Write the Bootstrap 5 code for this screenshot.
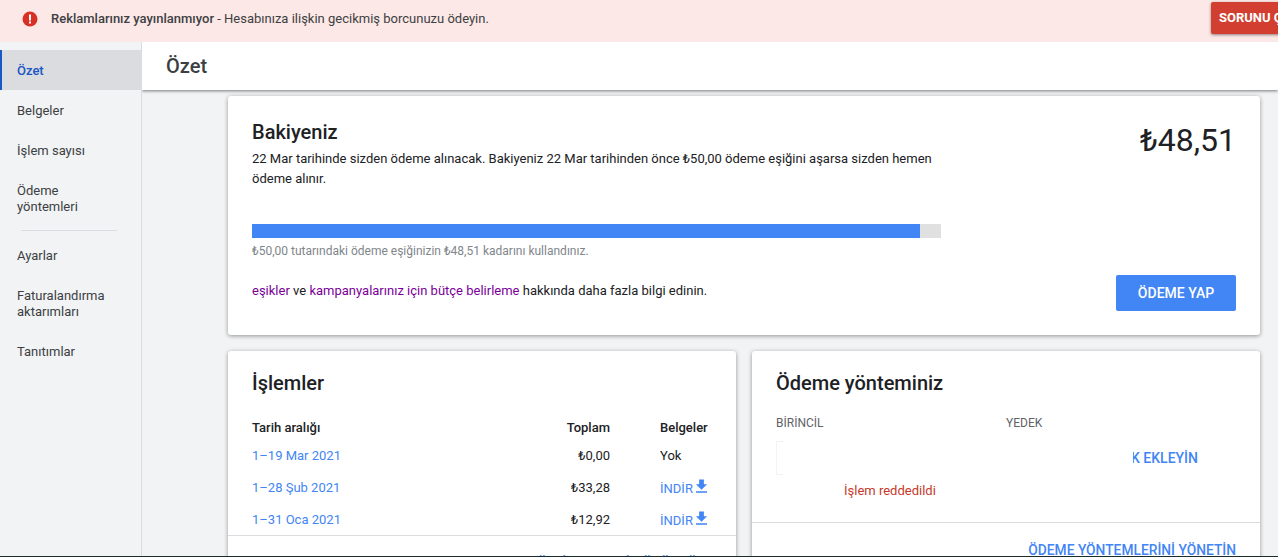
<!DOCTYPE html>
<html lang="tr">
<head>
  <meta charset="UTF-8">
  <meta name="viewport" content="width=device-width, initial-scale=1.0">
  <title>Özet</title>
  <link href="https://cdn.jsdelivr.net/npm/bootstrap@5.3.0/dist/css/bootstrap.min.css" rel="stylesheet">
  <style>
    html, body {
      height: 100%;
      overflow: hidden;
    }
    body {
      font-family: Roboto, "Liberation Sans", sans-serif;
      font-size: 13px;
      line-height: 20px;
      color: #202124;
      background: #f1f3f4;
    }
    a { text-decoration: none; }
    .app-shell {
      height: 557px;
      border-bottom: 1px solid #1c2b2b;
      overflow: hidden;
    }
    .alert-strip {
      height: 42px;
      flex: none;
      background: #fce8e6;
      color: #3c4043;
      padding: 0 0 5px 22px;
      overflow: hidden;
    }
    .alert-strip strong { font-weight: 500; }
    .alert-dot {
      width: 16px;
      height: 16px;
      margin-right: 13px;
      flex: none;
    }
    .fix-btn {
      flex: none;
      align-self: flex-start;
      width: 110px;
      height: 32px;
      margin: 2px -43px 0 auto;
      padding: 0 0 0 8px;
      background: #d23f31;
      color: #fff;
      font-size: 13px;
      font-weight: 700;
      border: 0;
      border-radius: 2px 0 0 2px;
      box-shadow: 0 1px 3px rgba(0,0,0,.45);
      white-space: nowrap;
      text-align: left;
      overflow: hidden;
    }
    .side-nav {
      width: 142px;
      flex: none;
      padding-top: 8px;
      background: #f1f3f4;
      border-right: 1px solid #dadce0;
    }
    .side-link {
      display: block;
      padding: 13px 28px 11px 17px;
      line-height: 16px;
      color: #3c4043;
    }
    .side-link.on {
      background: #dadce0;
      color: #1a56c4;
      font-weight: 500;
      padding-left: 15px;
      border-left: 2px solid #1a56c4;
    }
    .side-rule {
      height: 1px;
      margin: 4px 24px 4px 21px;
      background: #dadce0;
    }
    .page-head {
      height: 48px;
      flex: none;
      padding-left: 24px;
      background: #fff;
      font-size: 20px;
      font-weight: 500;
      color: #3c4043;
      box-shadow: 0 1px 3px rgba(0,0,0,.5);
      position: relative;
    }
    .page-body {
      padding: 6px 18px 0 86px;
      overflow: hidden;
    }
    .panel {
      border: 0;
      border-radius: 3px;
      box-shadow: 0 1px 4px rgba(0,0,0,.4);
    }
    .balance-panel {
      height: 239px;
      padding: 24px;
    }
    .panel-title {
      font-size: 20px;
      line-height: 24px;
      font-weight: 500;
      color: #202124;
    }
    .balance-copy {
      width: 689px;
      margin-top: 5px;
    }
    .amount {
      font-size: 32px;
      line-height: 40px;
      color: #202124;
    }
    .meter {
      width: 689px;
      height: 14px;
      margin-top: 35px;
      background: #e0e0e0;
    }
    .meter-fill {
      height: 100%;
      background: #4285f4;
    }
    .meter-note {
      width: 689px;
      margin-top: 3px;
      font-size: 12px;
      color: #80868b;
    }
    .visited { color: #7a0099; }
    .pay-btn {
      width: 120px;
      height: 36px;
      padding: 0;
      background: #4285f4;
      color: #fff;
      border: 0;
      border-radius: 2px;
      font-size: 14px;
      font-weight: 500;
    }
    .balance-foot { margin-top: 14px; }
    .learn-more { padding-top: 6px; }
    .deal-panel { height: 300px; }
    .deal-table {
      width: 456px;
      margin: 21px 0 0 0;
      table-layout: fixed;
    }
    .deal-table th, .deal-table td {
      padding: 0;
      height: 32px;
      vertical-align: middle;
      background: transparent;
      color: #202124;
      font-size: 13px;
    }
    .deal-table th { font-weight: 500; height: 24px; }
    .deal-table .date-cell { width: 278px; }
    .deal-table .sum-cell { width: 80px; text-align: right; }
    .deal-table .doc-cell { width: 98px; padding-left: 50px; white-space: nowrap; }
    .blue-link { color: #4285f4; }
    .down-icon {
      width: 19px;
      height: 19px;
      margin-left: -4px;
      vertical-align: -2.5px;
      fill: #4285f4;
    }
    .panel-top {
      padding: 20px 24px 0 24px;
    }
    .panel-foot {
      padding: 17px 24px;
      border-top: 1px solid #dadce0;
      font-weight: 500;
      font-size: 13.8px;
      text-align: right;
    }
    .deal-foot { margin-top: -1px; }
    .method-foot { margin-top: 21px; }
    .pay-labels { margin-top: 18px; }
    .pay-label {
      width: 230px;
      color: #5f6368;
      font-size: 12px;
    }
    .pay-row {
      height: 36px;
      margin-top: 7px;
    }
    .pay-slot {
      width: 7px;
      height: 34px;
      margin-right: 223px;
      flex: none;
      border-left: 1px solid #f3f3f3;
      border-top: 1px solid #f3f3f3;
      border-bottom: 1px solid #f3f3f3;
    }
    .add-clip {
      width: 65px;
      margin-left: 127px;
      overflow: hidden;
      white-space: nowrap;
      font-weight: 500;
      font-size: 14px;
    }
    .declined {
      margin: 5px 0 0 68px;
      color: #c5392a;
    }
  </style>
</head>
<body>
  <div class="app-shell d-flex flex-column">
    <div class="alert-strip d-flex align-items-center">
      <svg class="alert-dot" viewBox="0 0 16 16"><circle cx="8" cy="8" r="7.5" fill="#d93025"/><rect x="7" y="3.5" width="2" height="6" fill="#fff"/><rect x="7" y="10.5" width="2" height="2" fill="#fff"/></svg>
      <span><strong>Reklamlarınız yayınlanmıyor</strong> - Hesabınıza ilişkin gecikmiş borcunuzu ödeyin.</span>
      <button class="fix-btn" type="button">SORUNU ÇÖZ</button>
    </div>

    <div class="d-flex flex-grow-1 overflow-hidden">
      <nav class="side-nav">
        <a class="side-link on" href="#">Özet</a>
        <a class="side-link" href="#">Belgeler</a>
        <a class="side-link" href="#">İşlem sayısı</a>
        <a class="side-link" href="#">Ödeme yöntemleri</a>
        <div class="side-rule"></div>
        <a class="side-link" href="#">Ayarlar</a>
        <a class="side-link" href="#">Faturalandırma aktarımları</a>
        <a class="side-link" href="#">Tanıtımlar</a>
      </nav>

      <div class="d-flex flex-column flex-grow-1 overflow-hidden">
        <div class="page-head d-flex align-items-center">Özet</div>
        <div class="page-body flex-grow-1">
          <div class="card panel balance-panel">
            <div class="d-flex justify-content-between">
              <div>
                <div class="panel-title">Bakiyeniz</div>
                <div class="balance-copy">22 Mar tarihinde sizden ödeme alınacak. Bakiyeniz 22 Mar tarihinden önce ₺50,00 ödeme eşiğini aşarsa sizden hemen ödeme alınır.</div>
              </div>
              <div class="amount">₺48,51</div>
            </div>
            <div class="meter"><div class="meter-fill" style="width: 97%"></div></div>
            <div class="meter-note">₺50,00 tutarındaki ödeme eşiğinizin ₺48,51 kadarını kullandınız.</div>
            <div class="balance-foot d-flex justify-content-between align-items-start">
              <div class="learn-more"><a class="visited" href="#">eşikler</a> ve <a class="visited" href="#">kampanyalarınız için bütçe belirleme</a> hakkında daha fazla bilgi edinin.</div>
              <button class="pay-btn" type="button">ÖDEME YAP</button>
            </div>
          </div>

          <div class="row g-3 mt-0">
            <div class="col-6">
              <div class="card panel deal-panel">
                <div class="panel-top">
                  <div class="panel-title">İşlemler</div>
                  <table class="table table-borderless deal-table">
                    <thead>
                      <tr><th class="date-cell">Tarih aralığı</th><th class="sum-cell">Toplam</th><th class="doc-cell">Belgeler</th></tr>
                    </thead>
                    <tbody>
                      <tr><td class="date-cell"><a class="blue-link" href="#">1–19 Mar 2021</a></td><td class="sum-cell">₺0,00</td><td class="doc-cell">Yok</td></tr>
                      <tr><td class="date-cell"><a class="blue-link" href="#">1–28 Şub 2021</a></td><td class="sum-cell">₺33,28</td><td class="doc-cell"><a class="blue-link" href="#">İNDİR <svg class="down-icon" viewBox="0 0 24 24"><path d="M19 9h-4V3H9v6H5l7 7 7-7zM5 18v2h14v-2H5z"/></svg></a></td></tr>
                      <tr><td class="date-cell"><a class="blue-link" href="#">1–31 Oca 2021</a></td><td class="sum-cell">₺12,92</td><td class="doc-cell"><a class="blue-link" href="#">İNDİR <svg class="down-icon" viewBox="0 0 24 24"><path d="M19 9h-4V3H9v6H5l7 7 7-7zM5 18v2h14v-2H5z"/></svg></a></td></tr>
                    </tbody>
                  </table>
                </div>
                <div class="panel-foot deal-foot"><a class="blue-link" href="#">TÜM İŞLEMLERİ GÖRÜNTÜLE</a></div>
              </div>
            </div>
            <div class="col-6">
              <div class="card panel deal-panel">
                <div class="panel-top">
                  <div class="panel-title">Ödeme yönteminiz</div>
                  <div class="d-flex pay-labels">
                    <div class="pay-label">BİRİNCİL</div>
                    <div class="pay-label">YEDEK</div>
                  </div>
                  <div class="pay-row d-flex align-items-center">
                    <div class="pay-slot"></div>
                    <div class="add-clip d-flex justify-content-end"><a class="blue-link" href="#">YEDEK EKLEYİN</a></div>
                  </div>
                  <div class="declined">İşlem reddedildi</div>
                </div>
                <div class="panel-foot method-foot"><a class="blue-link" href="#">ÖDEME YÖNTEMLERİNİ YÖNETİN</a></div>
              </div>
            </div>
          </div>
        </div>
      </div>
    </div>
  </div>

  <script src="https://cdn.jsdelivr.net/npm/bootstrap@5.3.0/dist/js/bootstrap.bundle.min.js"></script>
</body>
</html>
